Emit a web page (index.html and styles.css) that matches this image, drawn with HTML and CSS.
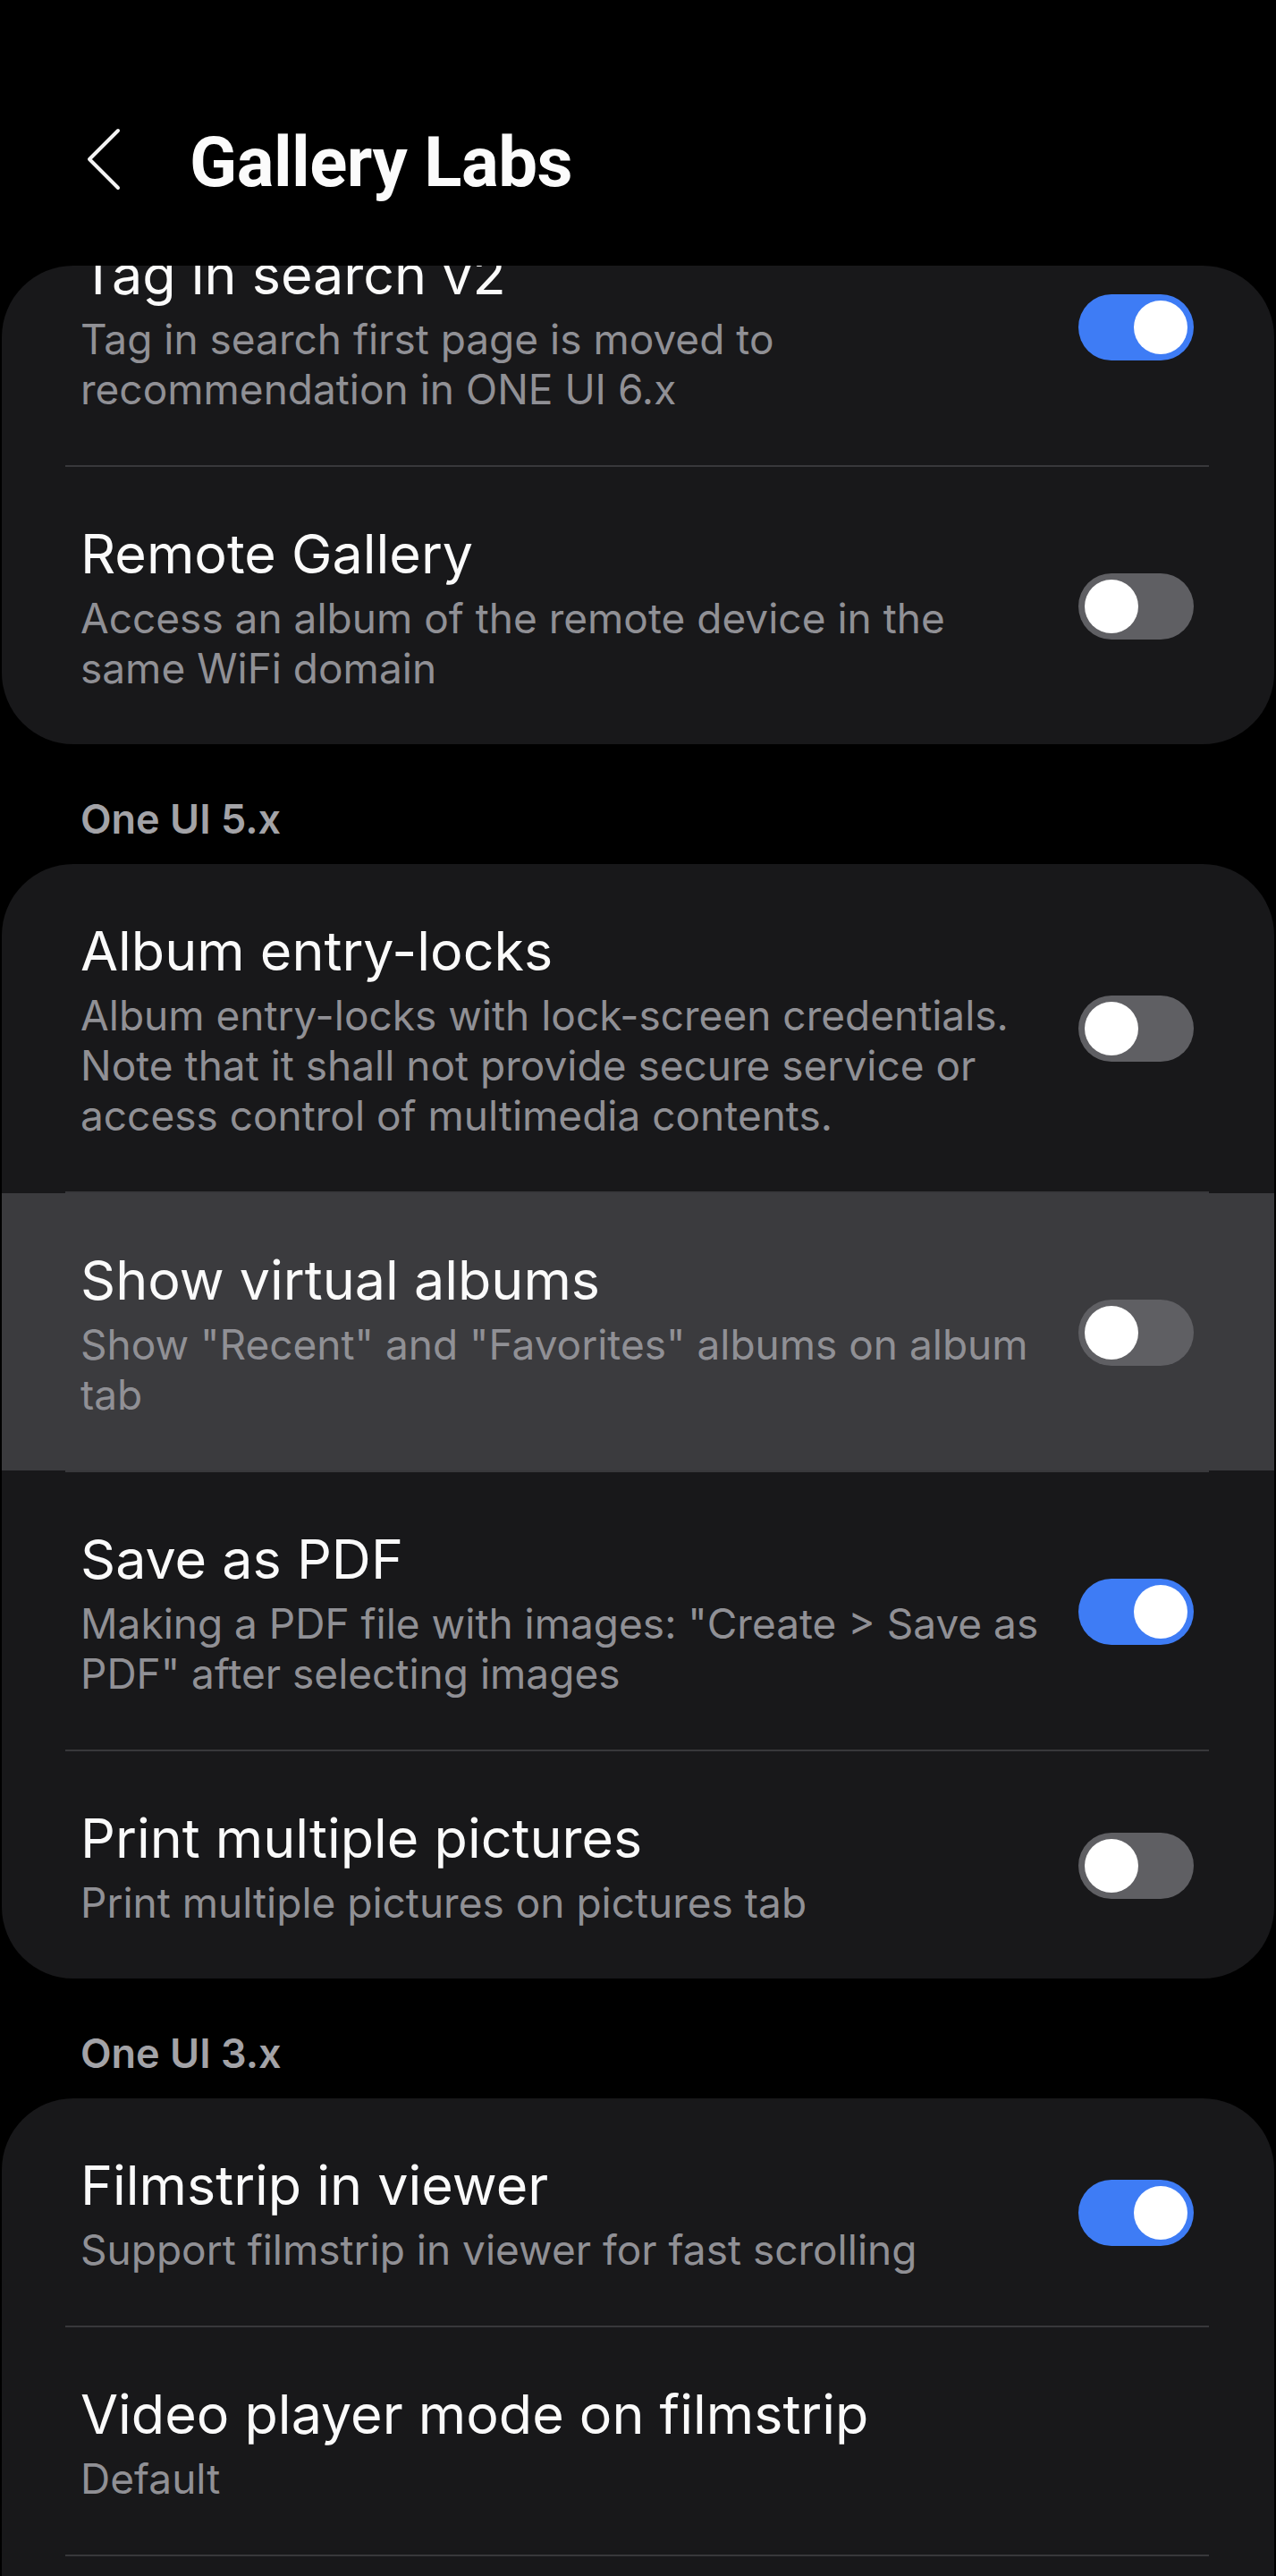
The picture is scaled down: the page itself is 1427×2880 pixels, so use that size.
FILE: index.html
```html
<!DOCTYPE html>
<html lang="en">
<head>
<meta charset="utf-8">
<title>Gallery Labs</title>
<link rel="stylesheet" href="styles.css">
</head>
<body>
<div class="screen">
  <header class="appbar">
    <svg class="back" viewBox="0 0 40 70" width="40" height="70" aria-hidden="true">
      <path d="M36 3 L4 35 L36 67" fill="none" stroke="#f4f4f4" stroke-width="4" stroke-linecap="round" stroke-linejoin="round"/>
    </svg>
    <h1 class="appbar-title">Gallery Labs</h1>
  </header>

  <section class="card">
    <div class="row row-clipped">
      <div class="text">
        <div class="title">Tag in search v2</div>
        <div class="sub">Tag in search first page is moved to recommendation in ONE UI 6.x</div>
      </div>
      <span class="switch on"><span class="knob"></span></span>
    </div>
    <div class="divider"></div>
    <div class="row">
      <div class="text">
        <div class="title">Remote Gallery</div>
        <div class="sub">Access an album of the remote device in the same WiFi domain</div>
      </div>
      <span class="switch"><span class="knob"></span></span>
    </div>
  </section>

  <div class="section-title">One UI 5.x</div>

  <section class="card">
    <div class="row">
      <div class="text">
        <div class="title">Album entry-locks</div>
        <div class="sub">Album entry-locks with lock-screen credentials. Note that it shall not provide secure service or access control of multimedia contents.</div>
      </div>
      <span class="switch"><span class="knob"></span></span>
    </div>
    <div class="divider"></div>
    <div class="row pressed">
      <div class="text">
        <div class="title">Show virtual albums</div>
        <div class="sub">Show "Recent" and "Favorites" albums on album tab</div>
      </div>
      <span class="switch"><span class="knob"></span></span>
    </div>
    <div class="divider"></div>
    <div class="row">
      <div class="text">
        <div class="title">Save as PDF</div>
        <div class="sub">Making a PDF file with images: "Create &gt; Save as PDF" after selecting images</div>
      </div>
      <span class="switch on"><span class="knob"></span></span>
    </div>
    <div class="divider"></div>
    <div class="row">
      <div class="text">
        <div class="title">Print multiple pictures</div>
        <div class="sub">Print multiple pictures on pictures tab</div>
      </div>
      <span class="switch"><span class="knob"></span></span>
    </div>
  </section>

  <div class="section-title">One UI 3.x</div>

  <section class="card card-open">
    <div class="row">
      <div class="text">
        <div class="title">Filmstrip in viewer</div>
        <div class="sub">Support filmstrip in viewer for fast scrolling</div>
      </div>
      <span class="switch on"><span class="knob"></span></span>
    </div>
    <div class="divider"></div>
    <div class="row">
      <div class="text">
        <div class="title">Video player mode on filmstrip</div>
        <div class="sub">Default</div>
      </div>
    </div>
    <div class="divider"></div>
    <div class="card-tail"></div>
  </section>
</div>
</body>
</html>
```

FILE: styles.css
```css
html, body {
  margin: 0;
  padding: 0;
  background: #000;
}

body {
  height: 2880px;
  overflow: hidden;
  font-family: "Inter", "Roboto", "Liberation Sans", sans-serif;
  color: #fafafa;
}

.screen {
  width: 1427px;
}

.appbar {
  height: 297px;
  box-sizing: border-box;
  display: flex;
  align-items: flex-start;
  padding: 143px 0 0 96px;
  gap: 76px;
}

.back {
  display: block;
  flex: none;
}

.appbar-title {
  margin: 0;
  font-family: "Roboto", "Liberation Sans", sans-serif;
  font-weight: 700;
  font-size: 78px;
  line-height: 78px;
  letter-spacing: -0.5px;
  color: #fbfbfb;
}

.card {
  margin: 0 2px;
  background: #18181a;
  border-radius: 80px;
  overflow: hidden;
}

.card-open {
  border-bottom-left-radius: 0;
  border-bottom-right-radius: 0;
}

.card-tail {
  height: 120px;
}

.row {
  display: flex;
  align-items: center;
  gap: 40px;
  padding: 59px 90px 57px 88px;
}

.row-clipped {
  margin-top: -87px;
}

.pressed {
  background: #3b3b3e;
}

.text {
  flex: 1;
  min-width: 0;
}

.title {
  font-size: 61px;
  line-height: 76px;
  font-weight: 400;
  color: #fafafa;
}

.sub {
  margin-top: 6px;
  font-size: 46px;
  line-height: 56px;
  color: #909095;
}

.divider {
  height: 2px;
  margin: 0 73px 0 71px;
  background: #38383b;
}

.switch {
  flex: none;
  width: 129px;
  height: 74px;
  box-sizing: border-box;
  border-radius: 37px;
  background: #5f5f63;
  display: flex;
  align-items: center;
  padding: 0 7px;
}

.switch .knob {
  width: 60px;
  height: 60px;
  border-radius: 50%;
  background: #ffffff;
}

.switch.on {
  background: #3e7cf5;
  justify-content: flex-end;
}

.section-title {
  height: 134px;
  box-sizing: border-box;
  padding: 59px 0 0 90px;
  font-size: 45px;
  line-height: 50px;
  font-weight: 600;
  color: #a3a3a7;
}
```
